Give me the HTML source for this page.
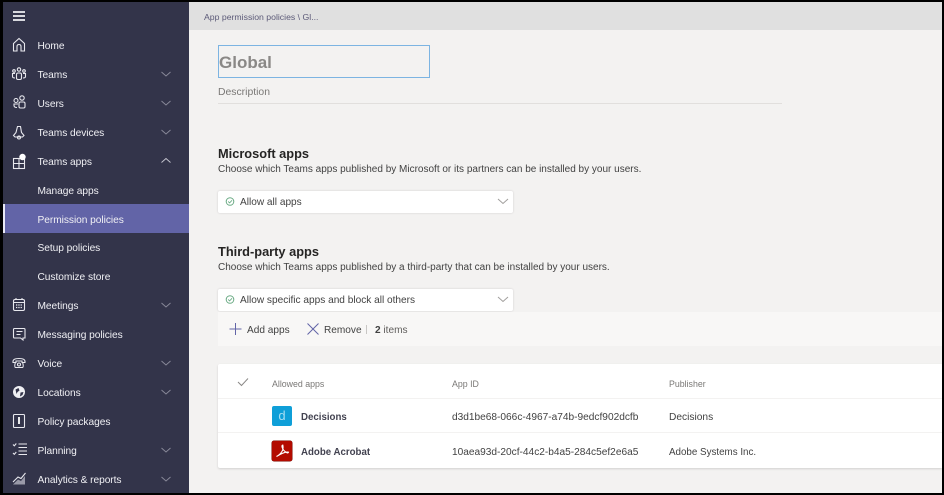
<!DOCTYPE html>
<html><head><meta charset="utf-8">
<style>
html,body{margin:0;padding:0;background:#000}
#p{position:relative;width:944px;height:495px;overflow:hidden;background:#000;font-family:"Liberation Sans",sans-serif}
#nav{position:absolute;left:3px;top:2px;width:186px;height:491px;background:#33344a}
#main{position:absolute;left:189px;top:2px;width:753px;height:491px;background:#f3f2f1}
#crumb{position:absolute;left:189px;top:2px;width:753px;height:28px;background:#e0e0e0}
.t{position:absolute;white-space:nowrap;line-height:14px}
.n{color:#f0f0f4;font-size:10.2px;left:37.5px;letter-spacing:-.05px}
.g{color:#424242}
svg{position:absolute;overflow:visible}
.i{fill:none;stroke:#e8e8ee;stroke-width:1.1}
.c{fill:none;stroke:#8a8a9a;stroke-width:.9}
#act{position:absolute;left:3px;top:204px;width:186px;height:29px;background:#6264a7;border-left:2px solid #e8e8f4;box-sizing:border-box}
.dd{position:absolute;left:218px;width:295px;height:22px;background:#fff;box-shadow:0 0 2px rgba(0,0,0,.15);border-radius:2px}
</style></head><body><div id="p">
<div id="nav"></div><div id="main"></div><div id="crumb"></div><div id="act"></div>

<svg style="left:0;top:0" width="189" height="495">
<path d="M13 12h12M13 16h12M13 20h12" stroke="#f0f0f4" stroke-width="1.8" fill="none"/>
<path class="i" d="M13.500 43.500L19 38.500L24.500 43.500V51H21V46.500Q21 44.500 19 44.500Q17 44.500 17 46.500V51H13.500Z"/>
<g class="i"><circle cx="19" cy="69.500" r="1.700"/><circle cx="14" cy="71" r="1.300"/><circle cx="24" cy="71" r="1.300"/><rect x="16.500" y="73" width="5" height="6.500" rx="1.500"/><path d="M15 73.500h-2.500v3q0 1.500 2.500 1.500M23 73.500h2.500v3q0 1.500-2.500 1.500"/></g>
<g class="i"><circle cx="22" cy="98" r="2.200"/><circle cx="16" cy="100.500" r="2"/><rect x="19" y="102" width="6" height="6" rx="1.500"/><path d="M18 104h-4v1.500q0 2 3 2"/></g>
<g class="i"><path d="M17.500 126.500h3l1 6 2.500 3-1.500 1.500h-7.500l-1.500-1.500 2.500-3z"/><circle cx="19" cy="137.500" r="1.500"/></g>
<g class="i"><rect x="13.500" y="158.500" width="11" height="10"/><path d="M19 158.500v10M13.500 163.500h11"/></g>
<circle cx="22.500" cy="157" r="3.200" fill="#fff"/>
<g class="i"><rect x="13.500" y="299.500" width="11" height="11" rx="1.500"/><path d="M16 298v2M22 298v2M13.500 302.500h11"/></g>
<path d="M16 305h6M16 307.500h6" stroke="#e8e8ee" stroke-width="1.200" stroke-dasharray="1.300 1" fill="none"/>
<g class="i"><path d="M14.500 328.500h9.500a1 1 0 0 1 1 1v8.500h-2v2l-2.500-2H14.500a1 1 0 0 1-1-1V329.500a1 1 0 0 1 1-1z"/><path d="M16.500 331.500h6M16.500 334.500h4"/></g>
<g class="i"><path d="M13 361.500q0-3 6-3t6 3v1h-3v-1.500h-6v1.500h-3z"/><path d="M15.500 362q-1.500 5 0 5.500h7q1.500-.5 0-5.500"/><circle cx="19" cy="364.500" r="1.500"/></g>
<circle cx="19" cy="392" r="6" fill="#f0f0f4"/>
<path d="M15.500 389.500l3-1.500 1 2.500-2 1.500-1 2zM20.500 392.500l3-.5-1 3-2.500 1.500z" fill="#33344a"/>
<rect x="13.500" y="414.500" width="11" height="13" rx="1" class="i"/>
<path d="M19 417v7" stroke="#fff" stroke-width="1.800"/>
<g class="i"><path d="M13 444.500l1.300 1.300 2-2.300M13 453l1.300 1.300 2-2.300"/><path d="M18.500 444h8.500M18.500 447.500h8.500M18.500 451h8.500M18.500 454.500h8.500"/></g>
<path d="M13 484.500l5-5 3 1.500 4-5v8.500z" fill="#9a9aa8"/><path class="i" d="M13 482l5-5 3 1.500 4.500-5.500"/>
<g class="c">
<path d="M161.500 72l4.500 4 4.500-4M161.500 101l4.500 4 4.500-4M161.500 130l4.500 4 4.500-4"/>
<path d="M161.500 162.500l4.500-4 4.500 4" stroke="#c8c8d2"/>
<path d="M161.500 303l4.500 4 4.500-4M161.500 361l4.500 4 4.500-4M161.500 390l4.500 4 4.500-4M161.500 448l4.500 4 4.500-4M161.500 477l4.500 4 4.500-4"/>
</g>
</svg>

<div class="t n" style="top:39.500px">Home</div>
<div class="t n" style="top:68.500px">Teams</div>
<div class="t n" style="top:97.500px">Users</div>
<div class="t n" style="top:126.500px">Teams devices</div>
<div class="t n" style="top:155.500px">Teams apps</div>
<div class="t n" style="top:184.500px">Manage apps</div>
<div class="t n" style="top:213.500px">Permission policies</div>
<div class="t n" style="top:242px">Setup policies</div>
<div class="t n" style="top:271px">Customize store</div>
<div class="t n" style="top:300px">Meetings</div>
<div class="t n" style="top:329px">Messaging policies</div>
<div class="t n" style="top:358px">Voice</div>
<div class="t n" style="top:387px">Locations</div>
<div class="t n" style="top:416px">Policy packages</div>
<div class="t n" style="top:445px">Planning</div>
<div class="t n" style="top:474px">Analytics &amp; reports</div>

<div class="t" style="left:204px;top:10px;font-size:8.700px;color:#5c5a78">App permission policies \ Gl...</div>
<div style="position:absolute;left:218px;top:45px;width:212px;height:33px;border:1px solid #7cb4e2;box-sizing:border-box"></div>
<div class="t" style="left:219px;top:53px;font-size:17px;line-height:20px;font-weight:bold;color:#8a8886">Global</div>
<div class="t" style="left:218px;top:86px;font-size:10.400px;color:#7a7876">Description</div>
<div style="position:absolute;left:218px;top:103px;width:564px;height:1px;background:#e1dfdd"></div>

<div class="t" style="left:218px;top:146px;font-size:12.800px;line-height:16px;font-weight:bold;color:#252423">Microsoft apps</div>
<div class="t g" style="left:218px;top:163px;font-size:10px">Choose which Teams apps published by Microsoft or its partners can be installed by your users.</div>
<div class="dd" style="top:191px"></div>
<div class="t g" style="left:240px;top:196px;font-size:10.100px">Allow all apps</div>

<div class="t" style="left:218px;top:244px;font-size:12.800px;line-height:16px;font-weight:bold;color:#252423">Third-party apps</div>
<div class="t g" style="left:218px;top:261px;font-size:10px">Choose which Teams apps published by a third-party that can be installed by your users.</div>
<div class="dd" style="top:289px"></div>
<div class="t g" style="left:240px;top:294px;font-size:10.100px">Allow specific apps and block all others</div>

<div style="position:absolute;left:218px;top:312px;width:724px;height:34px;background:#f8f7f6"></div>
<div class="t g" style="left:247px;top:324px;font-size:10.100px">Add apps</div>
<div class="t g" style="left:324px;top:324px;font-size:10.100px">Remove</div>
<div style="position:absolute;left:366px;top:325px;width:1px;height:9px;background:#c8c6c4"></div>
<div class="t g" style="left:375px;top:324px;font-size:10.100px;color:#605e5c"><b style="color:#424242">2</b> items</div>

<div style="position:absolute;left:218px;top:364px;width:724px;height:104px;background:#fff;box-shadow:0 1px 2px rgba(0,0,0,.14);border-radius:2px 0 0 2px"></div>
<div style="position:absolute;left:218px;top:398px;width:724px;height:1px;background:#f3f2f1"></div>
<div style="position:absolute;left:218px;top:432px;width:724px;height:1px;background:#f3f2f1"></div>
<div class="t" style="left:272px;top:377px;font-size:8.800px;color:#7a7876">Allowed apps</div>
<div class="t" style="left:452px;top:377px;font-size:8.800px;color:#7a7876">App ID</div>
<div class="t" style="left:669px;top:377px;font-size:8.800px;color:#7a7876">Publisher</div>

<div style="position:absolute;left:272px;top:406px;width:20px;height:20px;background:#0f9fd8;border-radius:2px"></div>
<div class="t" style="left:272px;top:409px;width:20px;text-align:center;font-size:13px;color:#a8def2">d</div>
<div style="position:absolute;left:272px;top:441px;width:20px;height:20px;background:#b30b00;border-radius:2px;box-shadow:0 0 0 .5px #7a0800"></div>

<div class="t" style="left:301px;top:411px;font-size:9.700px;font-weight:bold;color:#424250">Decisions</div>
<div class="t" style="left:301px;top:446px;font-size:9.700px;font-weight:bold;color:#424250">Adobe Acrobat</div>
<div class="t g" style="left:452px;top:411px;font-size:10.150px">d3d1be68-066c-4967-a74b-9edcf902dcfb</div>
<div class="t g" style="left:452px;top:446px;font-size:10.150px">10aea93d-20cf-44c2-b4a5-284c5ef2e6a5</div>
<div class="t g" style="left:669px;top:411px;font-size:10.200px">Decisions</div>
<div class="t g" style="left:669px;top:446px;font-size:9.800px">Adobe Systems Inc.</div>

<svg style="left:0;top:0" width="944" height="495">
<circle cx="230" cy="201.500" r="3.800" fill="none" stroke="#6bab85"/>
<path d="M228.200 201.500l1.400 1.400 2.400-2.600" fill="none" stroke="#6bab85" stroke-width=".9"/>
<circle cx="230" cy="299.500" r="3.800" fill="none" stroke="#6bab85"/>
<path d="M228.200 299.500l1.400 1.400 2.400-2.600" fill="none" stroke="#6bab85" stroke-width=".9"/>
<path d="M498 199l5 4.500 5-4.500M498 297l5 4.500 5-4.500" fill="none" stroke="#a19f9d"/>
<path d="M235.500 323v12M229.500 329h12" stroke="#6264a7" fill="none"/>
<path d="M307.500 323.500l11 11M318.500 323.500l-11 11" stroke="#6264a7" fill="none"/>
<path d="M238 382l3.500 3.500 6.500-7" fill="none" stroke="#8a8886"/>
<path d="M276.500 456.500q4-2 6-6q1-3 .3-5.500q-1 0 -.8 2q1 3.500 4.500 5.500q1.500 1 2-.3q-3.500-1-12 4.300z" fill="none" stroke="#fff" stroke-width="1.100"/>
</svg>
</div></body></html>
